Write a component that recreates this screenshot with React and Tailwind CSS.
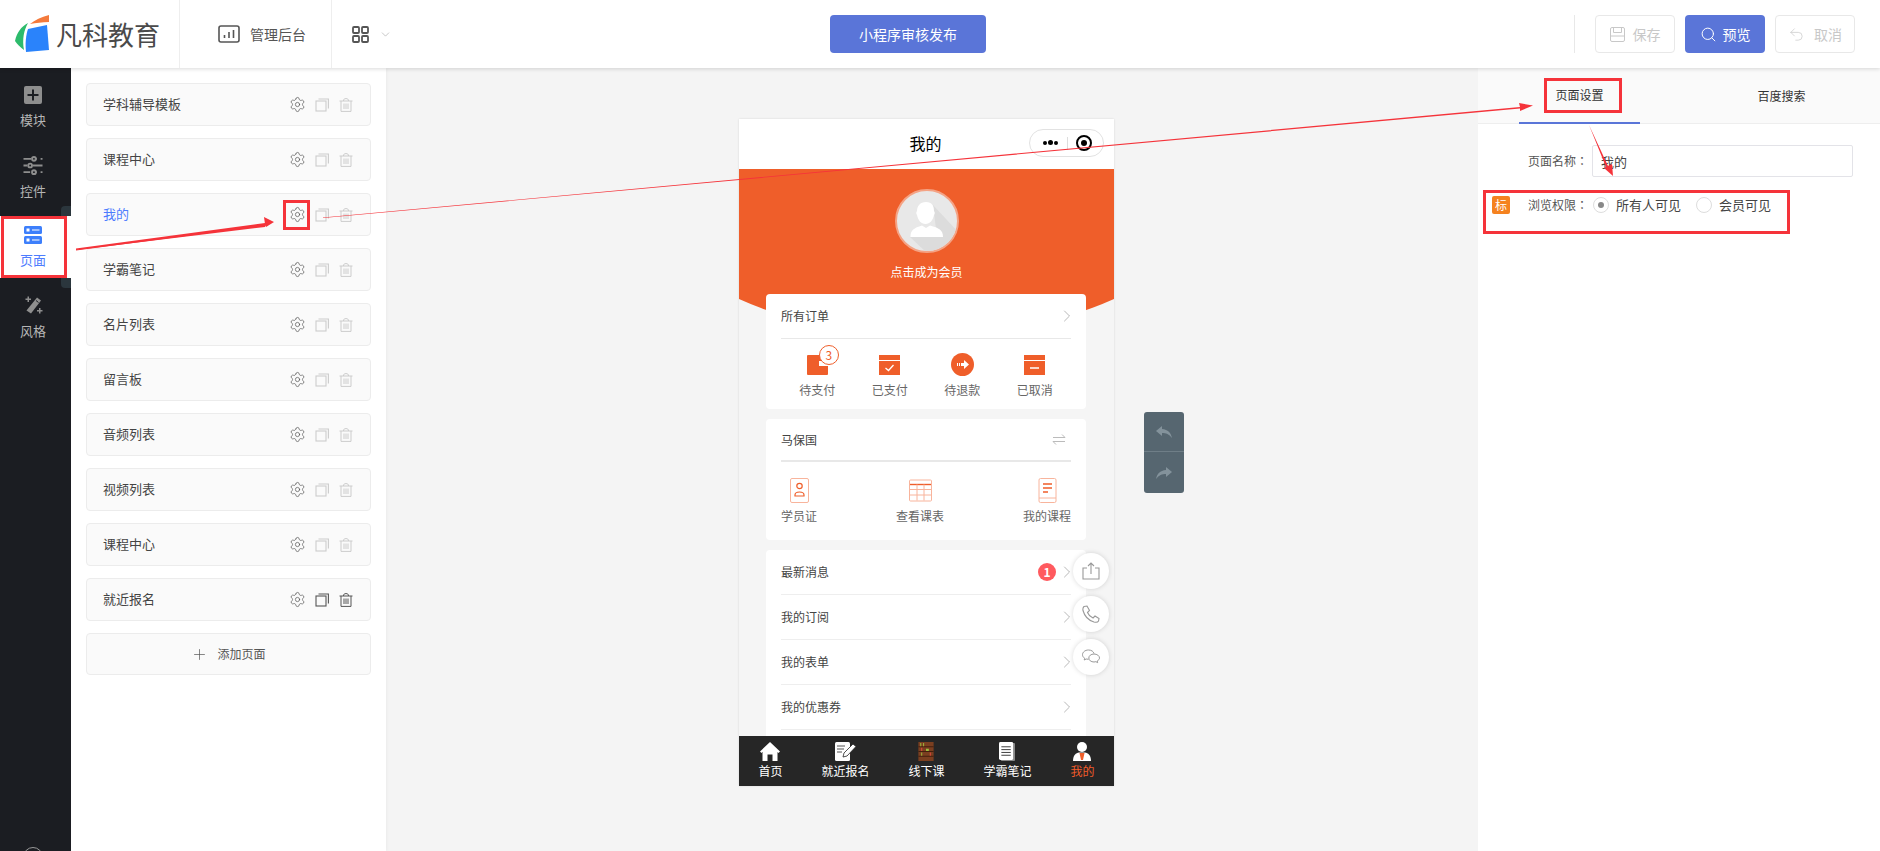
// App.jsx
import { ChevronDown, ChevronRight, Plus, Search, Settings, Undo2 } from "lucide-react";

const pages = ["学科辅导模板", "课程中心", "我的", "学霸笔记", "名片列表", "留言板", "音频列表", "视频列表", "课程中心", "就近报名"];
const orderItems = ["待支付", "已支付", "待退款", "已取消"];
const menuRows = ["最新消息", "我的订阅", "我的表单", "我的优惠券"];

function CopyIcon({ className }) {
  return (
    <svg viewBox="0 0 14 14" className={className} fill="none" stroke="currentColor" strokeWidth="1.1">
      <rect x="1" y="3" width="10" height="10" />
      <path d="M3.5 1H13.4V10.5" />
    </svg>
  );
}

function TrashIcon({ className }) {
  return (
    <svg viewBox="0 0 14 14" className={className} fill="none" stroke="currentColor" strokeWidth="1">
      <path d="M0.5 3H13.5M2 3V13.4H12V3M4.5 3C4.5 1 5.5 .6 7 .6S9.5 1 9.5 3M5 5.5V11M7 5.5V11M9 5.5V11" />
    </svg>
  );
}

function Logo() {
  return (
    <svg viewBox="0 0 36 38" className="w-[36px] h-[38px]">
      <path d="M0 26C2 17 6 12 13 8C9 15 7 24 9 35C5 32 2 29 0 26Z" fill="#2dbb6c" />
      <path d="M15 9C20 5 26 2 34 0V7C27 7 21 8 15 9Z" fill="#f47a3c" />
      <path d="M13 14L32 10L34 35L11 37C10 28 11 20 13 14Z" fill="#2a83fb" />
    </svg>
  );
}

function Colon() {
  // centred full-width colon, as in the original
  return <span className="font-['Noto_Sans_CJK_TC',sans-serif]">：</span>;
}

function SideItem({ label, active, children }) {
  return (
    <div className={`relative h-[62px] flex flex-col items-center pt-[10px] pr-[5px] ${active ? "bg-white text-[#4d7cfe]" : "text-[#b5b5b5]"}`}>
      {children}
      <span className="mt-[7px] text-[13px] leading-[18px]">{label}</span>
    </div>
  );
}

function PageCard({ name, active, last }) {
  return (
    <div className="h-[43px] flex items-center pl-[16px] pr-[17px] bg-[#fafafa] border border-[#ececec] rounded-[4px]">
      <span className={`flex-1 pb-[2px] text-[13px] ${active ? "text-[#4d7cfe]" : "text-[#444]"}`}>{name}</span>
      <Settings size={17} strokeWidth={1} className="text-[#555]" />
      <CopyIcon className={`w-[14px] h-[14px] ml-[9px] ${last ? "text-[#555]" : "text-[#ccc]"}`} />
      <TrashIcon className={`w-[14px] h-[14px] ml-[10px] ${last ? "text-[#555]" : "text-[#ccc]"}`} />
    </div>
  );
}

function OrderIcon({ index }) {
  if (index === 0) {
    return (
      <div className="relative w-[21px] h-[20px] mt-[1px] bg-[#ef5e2a] rounded-[1px]">
        <div className="absolute right-0 top-[6px] w-[9px] h-[5px] bg-white" />
        <div className="absolute left-[12px] top-[-10px] w-[20px] h-[20px] rounded-full bg-white border border-[#ef5e2a] text-[#ef5e2a] text-[12px] leading-[18px] text-center">3</div>
      </div>
    );
  }
  if (index === 2) {
    return (
      <svg viewBox="0 0 23 23" className="w-[23px] h-[23px] -mt-[1px]">
        <circle cx="11.5" cy="11.5" r="11.5" fill="#ef5e2a" />
        <path d="M6 10h1v3H6zM8 10h1v3H8zM10 10h3V7l5 4.5-5 4.5v-3h-3z" fill="#fff" />
      </svg>
    );
  }
  return (
    <svg viewBox="0 0 21 20" className="w-[21px] h-[20px] mt-[1px]">
      <path d="M0 0H21V5H0ZM0 6H21V20H0Z" fill="#ef5e2a" />
      {index === 1 ? (
        <path d="M6.5 13L9.5 15.5L14.5 10" fill="none" stroke="#fff" strokeWidth="1.3" />
      ) : (
        <path d="M6 13H15" fill="none" stroke="#fff" strokeWidth="1.5" />
      )}
    </svg>
  );
}

function Annotations() {
  return (
    <svg className="absolute inset-0 z-30 w-[1880px] h-[851px] pointer-events-none" viewBox="0 0 1880 851" fill="none">
      <g stroke="#f5333a" strokeWidth="3">
        <rect x="2.5" y="217.5" width="63" height="59" />
        <rect x="284.5" y="201.5" width="24" height="27" />
        <rect x="1545.5" y="79.5" width="75" height="32" />
        <rect x="1484.5" y="191.5" width="304" height="41" />
      </g>
      <path d="M76 249.5L265 224L264 217L274 222L266 227L265 225.5L76 250.5Z" fill="#f5333a" />
      <path d="M76 248.5L265 223V227L76 250Z" fill="#f5333a" />
      <path d="M323 217.5L1520 107L1519 103L1533 105.5L1520 111L1520 108.5L323 218Z" fill="#f5333a" />
      <path d="M1589 125L1608 166L1612 164L1613 176L1604 168L1606 167Z" fill="#f5333a" />
    </svg>
  );
}

export default function App() {
  return (
    <div className="relative w-[1880px] h-[851px] overflow-hidden flex flex-col bg-[#f4f4f4] font-['Noto_Sans_CJK_SC','Liberation_Sans',sans-serif] text-[12px] text-[#444]">
      {/* top bar */}
      <header className="relative z-20 h-[68px] shrink-0 bg-white shadow-[0_1px_4px_rgba(0,0,0,0.15)] flex items-center">
        <div className="w-[180px] h-full flex items-center pl-[15px] border-r border-[#eee]">
          <Logo />
          <span className="ml-[5px] text-[26px] text-[#4a4a4a] leading-none whitespace-nowrap">凡科教育</span>
        </div>
        <div className="w-[152px] h-full flex items-center pl-[38px] border-r border-[#eee]">
          <svg viewBox="0 0 22 18" className="w-[22px] h-[18px] text-[#555]" fill="none" stroke="currentColor" strokeWidth="1.6">
            <rect x="1" y="1" width="20" height="16" rx="2" />
            <path d="M6.5 13V10M11 13V7M15.5 13V5" />
          </svg>
          <span className="ml-[10px] text-[14px] text-[#555] whitespace-nowrap">管理后台</span>
        </div>
        <svg viewBox="0 0 17 17" className="ml-[20px] w-[17px] h-[17px] text-[#555]" fill="none" stroke="currentColor" strokeWidth="1.8">
          <rect x="1" y="1" width="6" height="6" rx="1" />
          <rect x="10" y="1" width="6" height="6" rx="1" />
          <rect x="1" y="10" width="6" height="6" rx="1" />
          <rect x="10" y="10" width="6" height="6" rx="1" />
        </svg>
        <ChevronDown size={13} strokeWidth={1} className="ml-[10px] text-[#999]" />
        <button className="ml-[438px] w-[156px] h-[38px] rounded-[4px] bg-[#5a75d8] text-white text-[14px]">小程序审核发布</button>
        <div className="ml-[588px] w-px h-[38px] bg-[#e8e8e8]" />
        <button className="ml-[20px] w-[80px] h-[38px] rounded-[4px] border border-[#e8e8e8] flex items-center justify-center text-[14px] text-[#c8c8c8]">
          <svg viewBox="0 0 15 15" className="w-[15px] h-[15px] mr-[8px]" fill="none" stroke="currentColor" strokeWidth="1">
            <rect x=".5" y=".5" width="14" height="14" rx="1.5" />
            <path d="M3.5 1V5.5H11.5V1M1 9H14" />
          </svg>
          保存
        </button>
        <button className="ml-[10px] w-[80px] h-[38px] rounded-[4px] bg-[#5a75d8] flex items-center justify-center text-[14px] text-white">
          <Search size={17} strokeWidth={1.4} className="mr-[6px]" />
          预览
        </button>
        <button className="ml-[10px] w-[80px] h-[38px] rounded-[4px] border border-[#e8e8e8] flex items-center justify-center text-[14px] text-[#c8c8c8]">
          <Undo2 size={17} strokeWidth={1} className="mr-[9px]" />
          取消
        </button>
      </header>

      <div className="flex-1 flex min-h-0">
        {/* dark side rail */}
        <nav className="relative w-[71px] shrink-0 bg-[#1b1d22] flex flex-col pt-[8px] gap-[8px]">
          <SideItem label="模块">
            <svg viewBox="0 0 18 18" className="w-[18px] h-[18px]">
              <rect width="18" height="18" rx="2" fill="#8e8e8e" />
              <path d="M9 3.5V14.5M3.5 9H14.5" stroke="#1b1d22" strokeWidth="2" />
            </svg>
          </SideItem>
          <SideItem label="控件">
            <svg viewBox="0 0 20 20" className="w-[20px] h-[19px]" fill="none" stroke="#8e8e8e" strokeWidth="2">
              <path d="M0 3H8M13 3H14M0 10H4M10 10H20M0 17H7M13 17H14M18 3H20M18 17H20" />
              <circle cx="11" cy="3" r="2" />
              <circle cx="7" cy="10" r="2" />
              <circle cx="11" cy="17" r="2" />
            </svg>
          </SideItem>
          <SideItem label="页面" active>
            <div className="absolute right-0 top-[-10px] w-[10px] h-[10px] bg-[#2b363d] rounded-tl-[4px]" />
            <div className="absolute right-0 bottom-[-10px] w-[10px] h-[10px] bg-[#2b363d] rounded-bl-[4px]" />
            <svg viewBox="0 0 18 18" className="w-[18px] h-[18px]">
              <rect width="18" height="8" rx="1.5" fill="#3d7ffb" />
              <rect y="10" width="18" height="8" rx="1.5" fill="#3d7ffb" />
              <path d="M2.5 2.5h3v3h-3zM8 3.5h7.5v1H8zM2.5 12.5h3v3h-3zM8 13.5h7.5v1H8z" fill="#fff" />
            </svg>
          </SideItem>
          <SideItem label="风格">
            <svg viewBox="0 0 19 19" className="w-[19px] h-[19px]" fill="#8e8e8e">
              <path d="M13 1.500L17 4.500L7 17.500L2.500 14.500Z" />
              <path d="M12 4.500L14.500 6.500" stroke="#1b1d22" strokeWidth="1" />
              <path d="M3.500 0.500h1.500v2h2v1.500h-2v2H3.500v-2h-2V2.500h2zM15 12h1.500v2h2v1.500h-2v2H15v-2h-2V14h2z" />
            </svg>
          </SideItem>
          <div className="absolute bottom-0 left-[23px] h-[4px] w-[20px] overflow-hidden">
            <div className="w-[20px] h-[20px] rounded-full border border-[#999]" />
          </div>
        </nav>

        {/* page list */}
        <aside className="w-[315px] shrink-0 bg-white px-[15px] pt-[15px] flex flex-col gap-[12px] shadow-[1px_0_3px_rgba(0,0,0,0.04)]">
          {pages.map((name, i) => (
            <PageCard key={i} name={name} active={i === 2} last={i === pages.length - 1} />
          ))}
          <div className="h-[42px] flex items-center justify-center bg-[#fafafa] border border-[#ececec] rounded-[4px] text-[#555]">
            <Plus size={17} strokeWidth={1} className="mr-[9px]" />
            <span>添加页面</span>
          </div>
        </aside>

        {/* canvas */}
        <main className="flex-1 flex items-start pl-[353px] pt-[51px] gap-[30px] min-w-0">
          <div className="relative w-[375px] h-[667px] shrink-0 overflow-hidden bg-[#f5f5f5] shadow-[0_0_2px_rgba(0,0,0,0.12)]">
            <div className="relative h-[50px] bg-white flex items-center justify-center text-[16px] text-black">
              <span className="pb-[3px] pr-[2px]">我的</span>
              <div className="absolute right-[10px] top-[10px] w-[75px] h-[28px] rounded-full border border-[#e2e2e2] flex items-center">
                <div className="w-[37px] flex justify-center gap-[1px] pl-[3px]">
                  <span className="w-[4px] h-[4px] rounded-full bg-black" />
                  <span className="w-[5px] h-[5px] rounded-full bg-black -mt-[.5px]" />
                  <span className="w-[4px] h-[4px] rounded-full bg-black" />
                </div>
                <div className="w-px h-[13px] bg-[#ddd]" />
                <div className="ml-[8px] w-[16px] h-[16px] rounded-full border-[2px] border-black flex items-center justify-center">
                  <div className="w-[6px] h-[6px] rounded-full bg-black" />
                </div>
              </div>
            </div>

            <div className="h-[167px] -mb-[42px] bg-[#ef5e2a] [clip-path:ellipse(299px_167px_at_50%_0)] flex flex-col items-center pt-[20px]">
              <div className="w-[64px] h-[64px] rounded-full bg-[#e8e8e8] border-[2px] border-[#f4a385] overflow-hidden">
                <svg viewBox="0 0 60 60" className="w-full h-full">
                  <path d="M36 14L62 42V62H30L13 46H40Z" fill="#dcdcdc" />
                  <path d="M29 11C35 11 37 15 37 20C38 21 38 23 37 24C36 29 33 33 28.500 33C24 33 21 29 20 24C19 23 19 21 20 20C20 15 23 11 29 11Z" fill="#fff" />
                  <path d="M13.500 46C13.500 39 17 37 25 34.500L29 37L33 34.500C42 37 46 39 46 46Z" fill="#fff" />
                </svg>
              </div>
              <span className="mt-[10px] text-white leading-[18px]">点击成为会员</span>
            </div>

            <div className="relative pl-[27px] pr-[28px] flex flex-col gap-[10px]">
              <section className="h-[115px] bg-white rounded-[4px] px-[15px]">
                <div className="h-[45px] flex items-center justify-between border-b border-[#e8e8e8] text-[#444]">
                  所有订单
                  <ChevronRight size={20} strokeWidth={1} className="text-[#aaa] -mr-[6px]" />
                </div>
                <div className="grid grid-cols-4 pt-[15px]">
                  {orderItems.map((label, i) => (
                    <div key={label} className="flex flex-col items-center text-[#666]">
                      <div className="h-[23px] flex items-start"><OrderIcon index={i} /></div>
                      <span className="mt-[4px] leading-[18px]">{label}</span>
                    </div>
                  ))}
                </div>
              </section>

              <section className="h-[121px] bg-white rounded-[4px] px-[15px]">
                <div className="h-[43px] flex items-center justify-between border-b-2 border-[#e8e8e8] text-[#444]">
                  马保国
                  <svg viewBox="0 0 14 12" className="w-[14px] h-[13px] mr-[5px] text-[#bbb]" fill="none" stroke="currentColor">
                    <path d="M1 4H13L10 1M13 8H1L4 11" />
                  </svg>
                </div>
                <div className="flex justify-between pt-[16px] text-[#666]">
                  <div className="flex flex-col items-center w-[36px]">
                    <svg viewBox="0 0 19 25" className="w-[19px] h-[25px]" fill="none">
                      <rect x=".5" y=".5" width="18" height="24" rx="1.5" stroke="#f8b49c" />
                      <circle cx="9.5" cy="8" r="2.7" stroke="#ef5e2a" strokeWidth="1.2" />
                      <path d="M5 17C5 13 14 13 14 17V18H5Z" stroke="#ef5e2a" strokeWidth="1.2" />
                    </svg>
                    <span className="mt-[4px] leading-[18px]">学员证</span>
                  </div>
                  <div className="flex flex-col items-center w-[48px]">
                    <svg viewBox="0 0 23 22" className="w-[23px] h-[25px]" fill="none" stroke="#f8b49c">
                      <rect x=".5" y=".5" width="22" height="21" rx="1" />
                      <path d="M1 5H22" stroke="#ef5e2a" strokeWidth="1.4" />
                      <path d="M1 10H22M1 15.5H22M8 5V21M15 5V21" />
                    </svg>
                    <span className="mt-[4px] leading-[18px]">查看课表</span>
                  </div>
                  <div className="flex flex-col items-center w-[48px]">
                    <svg viewBox="0 0 19 25" className="w-[19px] h-[25px]" fill="none">
                      <path d="M1 20V2A1.500 1.500 0 0 1 2.500 .5H16.500A1.500 1.500 0 0 1 18 2V23A1.500 1.500 0 0 1 16.500 24.500H2.500A1.500 1.500 0 0 1 1 23V20H18" stroke="#f8b49c" />
                      <path d="M5 6H14M5 10H14M5 14H10" stroke="#ef5e2a" strokeWidth="1.3" />
                    </svg>
                    <span className="mt-[4px] leading-[18px] whitespace-nowrap">我的课程</span>
                  </div>
                </div>
              </section>

              <section className="bg-white rounded-[4px] px-[15px]">
                {menuRows.map((label, i) => (
                  <div key={label} className="h-[45px] flex items-center border-b border-[#eee] text-[#444]">
                    <span className="flex-1">{label}</span>
                    {i === 0 && (
                      <span className="w-[18px] h-[18px] mr-[1px] rounded-full bg-[#ff5a5f] text-white text-[12px] font-bold leading-[18px] text-center">1</span>
                    )}
                    <ChevronRight size={20} strokeWidth={1} className="text-[#aaa] -mr-[6px]" />
                  </div>
                ))}
                <div className="h-[30px]" />
              </section>
            </div>

            {/* floating buttons */}
            <div className="absolute left-[334px] top-[434px] flex flex-col gap-[7px]">
              <div className="w-[36px] h-[36px] rounded-full bg-white shadow-[0_0_5px_rgba(0,0,0,0.15)] flex items-center justify-center">
                <svg viewBox="0 0 18 18" className="w-[18px] h-[18px] text-[#999]" fill="none" stroke="currentColor" strokeWidth="1.1">
                  <path d="M5 6H1V17H17V6H13M9 12V1M6 4L9 1L12 4" />
                </svg>
              </div>
              <div className="w-[36px] h-[36px] rounded-full bg-white shadow-[0_0_5px_rgba(0,0,0,0.15)] flex items-center justify-center">
                <svg viewBox="0 0 18 18" className="w-[18px] h-[18px] text-[#999]" fill="none" stroke="currentColor" strokeWidth="1.1">
                  <path d="M2 1.500L5 1L7.500 5.500L5.500 7.500C6.500 10 8.500 12 11 13L13 11L17 13.500L16.500 16C16 17 14 17.500 12 17C7 15.500 2.500 11 1 5.500C.7 4 1 2.500 2 1.500Z" />
                </svg>
              </div>
              <div className="w-[36px] h-[36px] rounded-full bg-white shadow-[0_0_5px_rgba(0,0,0,0.15)] flex items-center justify-center">
                <svg viewBox="0 0 18 16" className="w-[18px] h-[16px] text-[#999]" fill="none" stroke="currentColor" strokeWidth="1">
                  <path d="M12 4.500C11.500 2.500 9.500 1 6.500 1C3 1 .5 3.200 .5 5.700C.5 7.200 1.300 8.400 2.700 9.300L2.200 11L4.200 10C5 10.200 5.700 10.300 6.500 10.300" />
                  <path d="M12 5C9 5 6.800 6.800 6.800 9C6.800 11.200 9 13 12 13C12.700 13 13.300 12.900 13.900 12.700L15.700 13.700L15.200 12C16.600 11.200 17.500 10.200 17.500 9C17.500 6.800 15 5 12 5Z" />
                </svg>
              </div>
            </div>

            {/* bottom tab bar */}
            <div className="absolute inset-x-0 bottom-0 h-[50px] bg-[#262626] flex justify-around text-white pt-[6px]">
              <div className="flex flex-col items-center">
                <svg viewBox="0 0 20 19" className="w-[20px] h-[19px]" fill="#fff">
                  <path d="M10 0L20 9.500L18.500 11L17.500 10V19H12.500V12.500H7.500V19H2.500V10L1.500 11L0 9.500Z" />
                </svg>
                <span className="leading-[18px] mt-[1px]">首页</span>
              </div>
              <div className="flex flex-col items-center">
                <svg viewBox="0 0 21 19" className="w-[21px] h-[19px]">
                  <rect width="15" height="19" rx="1.500" fill="#fff" />
                  <path d="M2 4H10M2 7H9M2 10H7" stroke="#555" strokeWidth="1" />
                  <path d="M8 15L9 11L18 2L21 4.500L12 14Z" fill="#fff" stroke="#262626" strokeWidth=".8" />
                </svg>
                <span className="leading-[18px] mt-[1px]">就近报名</span>
              </div>
              <div className="flex flex-col items-center">
                <svg viewBox="0 0 16 20" className="w-[16px] h-[19px]">
                  <rect width="16" height="20" fill="#7b3f20" />
                  <path d="M0 5H16M0 10H16M0 15H16" stroke="#3f1e0e" strokeWidth="1" />
                  <path d="M2 1h1v3.500H2zM5 1h1v3.500H5zM3 11h1v3.500H3zM8 7h3v2.500H8z" fill="#9bbf3d" />
                  <path d="M12 11h1v3.500h-1zM3 6h1v3.500H3z" fill="#e8483c" />
                </svg>
                <span className="leading-[18px] mt-[1px]">线下课</span>
              </div>
              <div className="flex flex-col items-center">
                <svg viewBox="0 0 17 20" className="w-[16px] h-[19px]">
                  <rect x="2" y="1" width="15" height="19" rx="1" fill="#888" />
                  <rect width="15" height="19" rx="1.500" fill="#fff" />
                  <path d="M2.500 5H12.500M2.500 8H12.500M2.500 11H12.500M2.500 14H12.500" stroke="#333" strokeWidth="1" />
                </svg>
                <span className="leading-[18px] mt-[1px]">学霸笔记</span>
              </div>
              <div className="flex flex-col items-center text-[#f05c2a]">
                <svg viewBox="0 0 18 19" className="w-[18px] h-[19px]">
                  <circle cx="9" cy="5" r="5" fill="#fff" />
                  <path d="M0 19C0 13 3 11 6 10.500H12C15 11 18 13 18 19Z" fill="#fff" />
                  <path d="M6.500 11H11.500L10 18H8Z" fill="#ef5e2a" />
                </svg>
                <span className="leading-[18px] mt-[1px]">我的</span>
              </div>
            </div>
          </div>

          {/* undo / redo */}
          <div className="mt-[293px] w-[40px] h-[81px] rounded-[3px] bg-[#566670] flex flex-col items-center text-[#83929b]">
            <div className="h-[40px] w-full flex items-center justify-center border-b border-[#6f7e87]">
              <svg viewBox="0 0 16 12" className="w-[16px] h-[12px]" fill="currentColor">
                <path d="M6 0L0 5L6 10V7C10 7 13 8 16 12C15 7 12 3.500 6 3Z" />
              </svg>
            </div>
            <div className="flex-1 w-full flex items-center justify-center">
              <svg viewBox="0 0 16 12" className="w-[16px] h-[12px]" fill="currentColor">
                <path d="M10 0L16 5L10 10V7C6 7 3 8 0 12C1 7 4 3.500 10 3Z" />
              </svg>
            </div>
          </div>
        </main>

        {/* settings panel */}
        <aside className="w-[402px] shrink-0 bg-white">
          <div className="h-[56px] bg-[#fafafa] border-b border-[#eee] flex pl-[41px] gap-[81px]">
            <div className="w-[121px] h-[56px] border-b-2 border-[#5a75d8] flex items-center justify-center text-[#333]">页面设置</div>
            <div className="w-[121px] h-[56px] flex items-center justify-center text-[#333]">百度搜索</div>
          </div>
          <div className="flex items-center mt-[21px] pl-[50px]">
            <span className="w-[64px] text-[#555]">页面名称<Colon /></span>
            <input readOnly value="我的" className="w-[261px] h-[32px] px-[8px] border border-[#e3e3e8] rounded-[2px] text-[13px] text-[#444] outline-none" />
          </div>
          <div className="flex items-center mt-[18px] pl-[14px]">
            <span className="w-[18px] h-[18px] rounded-[2px] bg-[#f5821f] text-white text-[12px] leading-[18px] text-center">标</span>
            <span className="ml-[18px] w-[65px] text-[#555]">浏览权限<Colon /></span>
            <span className="w-[16px] h-[16px] rounded-full border border-[#ddd] flex items-center justify-center">
              <span className="w-[6px] h-[6px] rounded-full bg-[#888]" />
            </span>
            <span className="ml-[7px] text-[13px] text-[#444]">所有人可见</span>
            <span className="ml-[15px] w-[16px] h-[16px] rounded-full border border-[#ddd]" />
            <span className="ml-[7px] text-[13px] text-[#444]">会员可见</span>
          </div>
        </aside>
      </div>

      <Annotations />
    </div>
  );
}
